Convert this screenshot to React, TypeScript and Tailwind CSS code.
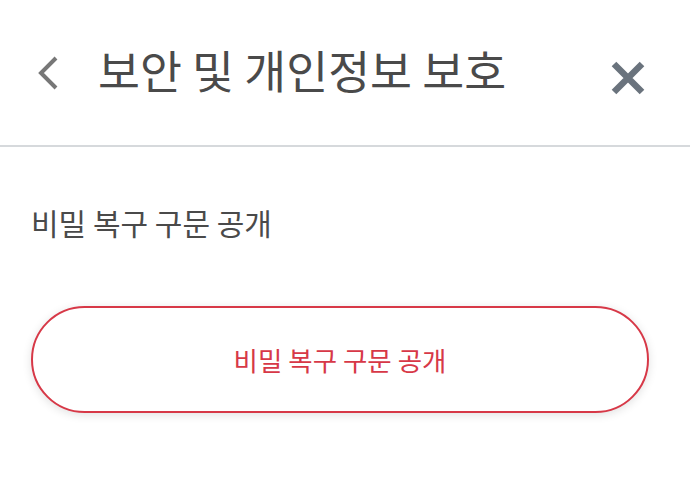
import React from "react";

export default function App() {
  const font = { fontFamily: '"Noto Sans CJK KR", "Noto Sans", sans-serif' };
  return (
    <div className="w-[690px] h-[490px] bg-white overflow-hidden" style={font}>
      <div className="h-[147px] flex items-center px-[36px] border-b-2 border-[#d6d9dc]">
        <svg width="24" height="36" viewBox="0 0 24 36" className="shrink-0">
          <path d="M20 3 L5 18 L20 33" fill="none" stroke="#777777" strokeWidth="4" />
        </svg>
        <div className="ml-[38px] text-[45.6px] leading-none text-[#4a4a4a] flex-1 -mt-[6px]">보안 및 개인정보 보호</div>
        <svg width="36" height="36" viewBox="0 0 36 36" className="shrink-0 mr-[8px] mt-[10px]">
          <path d="M4 4 L32 32 M32 4 L4 32" fill="none" stroke="#6a737d" strokeWidth="6.5" />
        </svg>
      </div>
      <div className="px-[31px]">
        <div className="mt-[60px] text-[30px] leading-none text-[#4a4a4a]">비밀 복구 구문 공개</div>
        <button className="mt-[69px] w-[618px] h-[107px] rounded-full border-2 border-[#d73847] bg-white shadow-[0_2px_10px_rgba(0,0,0,0.12)] flex items-center justify-center text-[26.5px] text-[#d73847]">
          비밀 복구 구문 공개
        </button>
      </div>
    </div>
  );
}
